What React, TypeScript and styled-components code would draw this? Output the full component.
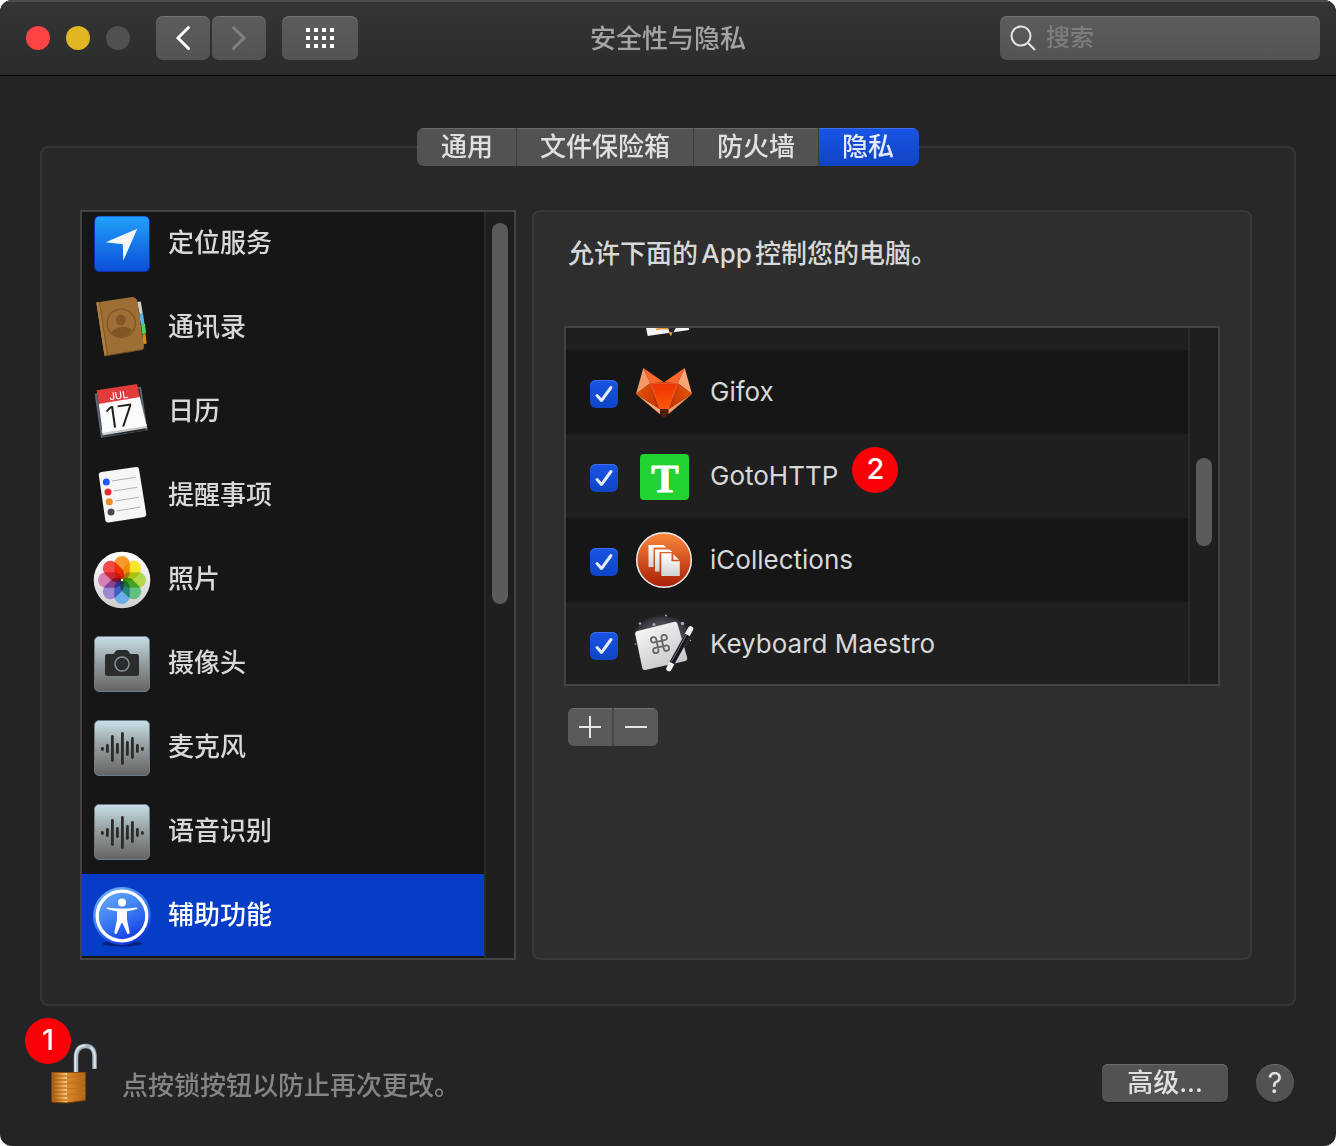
import React, { useState } from "react";
import styled, { createGlobalStyle, css } from "styled-components";

const GlobalStyle = createGlobalStyle`
  *, *::before, *::after { box-sizing: border-box; }
  body {
    margin: 0;
    background: #ffffff;
    font-family: Inter, "Noto Sans CJK SC", sans-serif;
    font-size: 26px;
    line-height: 38px;
    color: #d8d8d8;
  }
  button, input { font: inherit; color: inherit; margin: 0; }
  button { border: 0; padding: 0; background: none; }
  ul { list-style: none; margin: 0; padding: 0; }
  h1, p { margin: 0; font-size: inherit; font-weight: 500; }
  svg { display: block; overflow: visible; flex: none; }
`;

const Window = styled.div`
  display: flex;
  flex-direction: column;
  min-height: 100vh;
  background: #242426;
  border-radius: 12px;
  overflow: hidden;
`;

/* ---------- Title bar ---------- */

const TitleBar = styled.header`
  display: grid;
  grid-template-columns: 1fr auto 1fr;
  align-items: center;
  height: 76px;
  padding: 0 16px;
  background: linear-gradient(#343535, #2a2b2b);
  border-bottom: 1px solid #000;
  box-shadow: inset 0 2px #4c4d4d;
`;

const TitleTools = styled.div`
  display: flex;
  align-items: center;
  gap: 16px;
`;

const Lights = styled.div`
  display: flex;
  gap: 16px;
  padding: 0 10px;
`;

const Light = styled.button<{ $color: string }>`
  width: 24px;
  height: 24px;
  border-radius: 50%;
  background: ${(p) => p.$color};
`;

const NavPair = styled.div`
  display: flex;
  gap: 2px;
`;

const raised = css`
  background: linear-gradient(#5b5c5e, #525355);
  box-shadow: inset 0 1px #707173;
`;

const ToolButton = styled.button<{ $width: number }>`
  display: grid;
  place-items: center;
  width: ${(p) => p.$width}px;
  height: 44px;
  border-radius: 7px;
  ${raised}
`;

const Title = styled.h1`
  padding-top: 2px;
  color: #a4a4a6;
`;

const SearchBox = styled.label`
  display: flex;
  align-items: center;
  justify-self: end;
  gap: 10px;
  width: 320px;
  height: 44px;
  padding: 0 10px;
  border-radius: 7px;
  ${raised}
`;

const SearchInput = styled.input`
  flex: 1;
  min-width: 0;
  height: 38px;
  padding: 0;
  border: 0;
  outline: 0;
  background: transparent;
  font-size: 24px;
  font-weight: 500;
  &::placeholder { color: #7c7d7e; opacity: 1; }
`;

/* ---------- Tabs and panels ---------- */

const Main = styled.main`
  flex: 1;
  display: flex;
  flex-direction: column;
  padding: 52px 40px 0;
`;

const Tabs = styled.div`
  z-index: 1;
  align-self: center;
  display: flex;
  gap: 1px;
  height: 38px;
  margin-bottom: -20px;
  border-radius: 7px;
  overflow: hidden;
  background: #3e3e3f;
`;

const Tab = styled.button<{ $active: boolean }>`
  padding: 0 23px;
  color: ${(p) => (p.$active ? "#e4eafc" : "#e0e0e0")};
  font-weight: 500;
  background: ${(p) => (p.$active ? "linear-gradient(#1854e4, #1044c4)" : "#525252")};
  box-shadow: inset 0 1px ${(p) => (p.$active ? "#3d70ea" : "#6a6a6a")};
  &:first-child { padding-left: 24px; }
  &:last-child { padding-right: 25px; }
`;

const Panel = styled.section`
  flex: 1;
  display: flex;
  gap: 16px;
  padding: 62px 42px 44px 38px;
  border: 2px solid #363637;
  border-radius: 8px;
  background: #282828;
`;

const ListFrame = styled.div`
  display: flex;
  overflow: hidden;
  border: 2px solid #434343;
  background: #161616;
`;

const Sidebar = styled(ListFrame)`
  width: 436px;
  flex: none;
`;

const ServiceList = styled.ul`
  flex: 1;
  margin-top: -10px;
`;

const ServiceRow = styled.button<{ $active: boolean }>`
  display: flex;
  align-items: center;
  gap: 16px;
  width: 100%;
  height: 84px;
  padding: 0 10px;
  font-weight: 500;
  text-align: left;
  ${(p) =>
    p.$active &&
    css`
      color: #fff;
      background: #063dc7;
      box-shadow: inset 0 -2px #161616;
    `}
`;

const RowText = styled.span`
  padding-bottom: 2px;
`;

const Track = styled.div`
  width: 30px;
  padding: 11px 6px;
  border-left: 2px solid #2b2b2b;
  background: #1f1f1f;
`;

const Thumb = styled.div<{ $offset: number; $length: number }>`
  width: 16px;
  height: ${(p) => p.$length}px;
  margin-top: ${(p) => p.$offset}px;
  border-radius: 8px;
  background: #5b5b5b;
`;

const Detail = styled.section`
  flex: 1;
  min-width: 0;
  padding: 23px 30px;
  border: 2px solid #393939;
  border-radius: 8px;
  background: #2e2e2e;
`;

const Prompt = styled.p`
  padding-left: 4px;
  margin-bottom: 53px;
  text-autospace: normal;
`;

const AppFrame = styled(ListFrame)`
  height: 360px;
`;

const AppList = styled.ul`
  flex: 1;
  margin-top: -62px;
`;

const AppRow = styled.li`
  height: 84px;
  background: #161616;
  &:nth-child(odd) { background: #1f1f1f; }
`;

const AppLabel = styled.label`
  display: flex;
  align-items: center;
  gap: 16px;
  height: 100%;
  padding-left: 24px;
`;

const AppName = styled.span`
  position: relative;
`;

const CheckCell = styled.span`
  display: grid;
  place-items: center;
  margin-top: 4px;
  & > * { grid-area: 1 / 1; }
`;

const CheckInput = styled.input`
  appearance: none;
  width: 28px;
  height: 28px;
  border-radius: 6px;
  background: #525252;
  box-shadow: inset 0 1px #707173;
  &:checked {
    background: linear-gradient(#1854e4, #1044c4);
    box-shadow: inset 0 1px #3d70ea;
  }
  & + svg { pointer-events: none; visibility: hidden; }
  &:checked + svg { visibility: visible; }
`;

const Badge = styled.span<{ $left: string; $top: number }>`
  position: absolute;
  left: ${(p) => p.$left};
  top: ${(p) => p.$top}px;
  z-index: 1;
  width: 46px;
  height: 46px;
  border-radius: 50%;
  background: #fb0007;
  color: #fff;
  font-size: 29px;
  font-weight: 500;
  line-height: 44px;
  text-align: center;
`;

const EditButtons = styled.div`
  display: inline-flex;
  gap: 2px;
  margin: 22px 4px 0;
  border-radius: 6px;
  overflow: hidden;
  background: #484848;
`;

const EditButton = styled.button`
  display: grid;
  place-items: center;
  width: 44px;
  height: 38px;
  background: #5a5a5a;
  box-shadow: inset 0 1px #707070;
`;

/* ---------- Footer ---------- */

const Footer = styled.footer`
  display: flex;
  align-items: flex-end;
  gap: 28px;
  padding: 36px 42px 44px 50px;
`;

const LockNote = styled.div`
  flex: 1;
  display: flex;
  align-items: flex-end;
  gap: 22px;
  color: #858586;
  line-height: 32px;
`;

const LockButton = styled.button`
  position: relative;
`;

const AdvancedButton = styled.button`
  width: 126px;
  height: 38px;
  border-radius: 6px;
  color: #e0e0e0;
  font-weight: 500;
  background: #525252;
  box-shadow: inset 0 1px #6a6a6a, 0 1px 1px #1a1a1a;
`;

const HelpButton = styled.button`
  width: 38px;
  height: 38px;
  border-radius: 50%;
  color: #e0e0e0;
  font-size: 29px;
  line-height: 36px;
  background: #525252;
  box-shadow: inset 0 1px #6a6a6a, 0 1px 1px #1a1a1a;
`;

/* ---------- Icons ---------- */

const Icon = ({ children }: { children: React.ReactNode }) => (
  <svg width="60" height="60" viewBox="0 0 60 60" aria-hidden="true">
    {children}
  </svg>
);

const LocationIcon = () => (
  <Icon>
    <defs>
      <linearGradient id="loc" x1="0" y1="0" x2="0" y2="1">
        <stop offset="0" stopColor="#22a0fa" />
        <stop offset="1" stopColor="#0c4fd8" />
      </linearGradient>
    </defs>
    <rect x="2" y="2" width="56" height="56" rx="5" fill="#0a2fb0" />
    <rect x="3" y="2.5" width="54" height="54.5" rx="4.5" fill="url(#loc)" />
    <path d="M45.3 14.7 31.3 46.7 30.8 30.3 13.7 28.3Z" fill="#f6f6f6" />
  </Icon>
);

const ContactsIcon = () => (
  <Icon>
    <path d="M45 4l3.8-.4 2 12-3 1z" fill="#d0d0d0" />
    <path d="M47 16.500l4-.8 1.500 10-3.500 1z" fill="#55b9e6" />
    <path d="M49 26.500l4-.8 1 9.800-3.500.8z" fill="#4ed160" />
    <path d="M50.500 36.500l3-.8 1.200 9.800-4 .9z" fill="#d98a12" />
    <path d="M4.300 4.500 40-1q3.500-.4 5.300 3.700L52 49q0 2.300-2 2.700L12.500 58z" fill="#9d6f35" />
    <path d="M4.300 4.500 7.500 4l8 53.400-3 .6z" fill="#b07c3c" />
    <path d="M7.500 4l8 53.400" stroke="#7c5424" strokeWidth="1" fill="none" />
    <path d="M12.500 58 50 51.700q2-.5 2-2.700" stroke="#6e4a1e" strokeWidth="1" fill="none" />
    <circle cx="29.300" cy="25.300" r="14.200" fill="none" stroke="#7f5726" strokeWidth="1.300" />
    <ellipse cx="28.800" cy="22" rx="4.800" ry="5.500" fill="#7f5726" />
    <path d="M19.500 34.500q2.500-4.500 9-5.500 7.500-.9 11.500 3-3.500 6.500-10 7-6.500.3-10.500-4.500z" fill="#7f5726" />
  </Icon>
);

const CalendarIcon = () => (
  <Icon>
    <path d="M2.700 11.700 49 4.700l6.700 43.600L9 55.700z" fill="#5b6a76" />
    <path d="M5.200 13 47.500 6.500l6.200 42L10.500 54.500z" fill="#26292c" />
    <path d="M9.500 48 54.500 42l.6 4-44.400 7.500z" fill="#c9c9c9" />
    <path d="M6.700 21 47.700 14 54.600 44 10.500 51z" fill="#fbfbfb" />
    <path d="M4.700 8.300 45 2l3 13L6.700 22z" fill="#e03c3c" />
    <g transform="rotate(-8 27 28)" fill="#1c1c1c" textAnchor="middle" fontFamily="Inter, sans-serif">
      <text x="28.500" y="17" fontSize="10" fill="#fff">JUL</text>
      <text x="27" y="45" fontSize="30" fontWeight="300">17</text>
    </g>
  </Icon>
);

const RemindersIcon = () => (
  <Icon>
    <path d="M9.500 6 44 1.100q2.600-.3 3 2.200L54.300 48q.3 2.500-2 3L16.500 56.400q-2.700.3-3.200-2.200L6.800 9q-.3-2.600 2.700-3z" fill="#f6f6f6" />
    <g stroke="#a9a9a9" strokeWidth="0.900">
      <path d="M20 15l23.700-3.700M21.700 25l23.600-3.700M23.300 35l23.400-3.700M25 45l23.300-4" />
    </g>
    <circle cx="14.300" cy="16" r="3.500" fill="#1f5cf5" />
    <circle cx="16" cy="26" r="3.500" fill="#e3302f" />
    <circle cx="17.300" cy="35.700" r="3.500" fill="#ee8e22" />
    <circle cx="19" cy="46" r="3.500" fill="#454a55" />
  </Icon>
);

const petals = ["#f99a2c", "#f7e52a", "#b2d84a", "#5fc283", "#6aaeea", "#9d88d2", "#d880b2", "#f54a4a"];

const PhotosIcon = () => (
  <Icon>
    <defs>
      <linearGradient id="pho" x1="0" y1="0" x2="0" y2="1">
        <stop offset="0" stopColor="#ffffff" />
        <stop offset="1" stopColor="#cfcfcf" />
      </linearGradient>
    </defs>
    <circle cx="30" cy="30" r="28.300" fill="url(#pho)" />
    <g style={{ isolation: "isolate" }}>
      {petals.map((color, i) => (
        <rect
          key={color}
          x="22.300"
          y="6"
          width="15.400"
          height="24"
          rx="7.700"
          fill={color}
          transform={`rotate(${i * 45} 30 30)`}
          style={{ mixBlendMode: "multiply" }}
        />
      ))}
    </g>
    <circle cx="30" cy="30" r="1.200" fill="#fff" />
  </Icon>
);

const SteelTile = ({ id }: { id: string }) => (
  <>
    <defs>
      <linearGradient id={id} x1="0" y1="0" x2="0" y2="1">
        <stop offset="0" stopColor="#c8e0e8" />
        <stop offset="0.500" stopColor="#929a9c" />
        <stop offset="1" stopColor="#646464" />
      </linearGradient>
    </defs>
    <rect x="2.500" y="2.500" width="55" height="55" rx="4.500" fill={`url(#${id})`} stroke="#6f7d88" />
  </>
);

const CameraIcon = () => (
  <Icon>
    <SteelTile id="cam" />
    <path d="M15.500 20h5q1.500 0 2.200-1.500l.6-1q.8-1.500 2.500-1.500h8.400q1.700 0 2.500 1.500l.6 1Q38 20 39.500 20h5q2.500 0 2.500 2.500v17q0 2.500-2.500 2.500h-29Q13 42 13 39.500v-17Q13 20 15.500 20z" fill="#2c2c2c" />
    <circle cx="30" cy="30" r="7" fill="none" stroke="#8a979c" strokeWidth="1.400" />
  </Icon>
);

const waveBars = [
  [29, 33],
  [26, 35],
  [17, 44],
  [25, 36],
  [14, 47],
  [23, 38],
  [19, 41],
  [26, 35],
  [29, 33],
];

const WaveIcon = ({ id }: { id: string }) => (
  <Icon>
    <SteelTile id={id} />
    {waveBars.map(([top, bottom], i) => (
      <rect key={i} x={9 + i * 5} y={top} width="2.800" height={bottom - top} rx="1.400" fill="#2b2b2b" />
    ))}
  </Icon>
);

const AccessibilityIcon = () => (
  <Icon>
    <defs>
      <linearGradient id="acc" x1="0.200" y1="0" x2="0.700" y2="1">
        <stop offset="0" stopColor="#6cb0fb" />
        <stop offset="0.500" stopColor="#3b7df3" />
        <stop offset="1" stopColor="#0a2fe0" />
      </linearGradient>
    </defs>
    <ellipse cx="30" cy="57.500" rx="20" ry="3" fill="#04247c" />
    <circle cx="30" cy="30" r="29" fill="url(#acc)" />
    <circle cx="30" cy="30" r="24.800" fill="none" stroke="#fff" strokeWidth="3.300" />
    <circle cx="30" cy="16.500" r="4" fill="#fff" />
    <path d="M15.500 21.500q6.500 1 10 1h9q3.500 0 10-1 1.500.2.500 1.600-4.500 1.400-10 2.200v8.200l2.700 13q-.3 2-2.400 1.300L30.500 37h-1l-4.800 10.800q-2 .7-2.400-1.300l2.700-13v-8.200q-5.500-.8-10-2.200-1-1.400.5-1.600z" fill="#fff" />
  </Icon>
);

const SketchIcon = () => (
  <Icon>
    <path d="M4 10 52 4l3 48-41.300 6z" fill="#f4f4f4" />
    <path d="M22 51.500q6-1.500 12-.5" stroke="#e8952a" strokeWidth="1.500" fill="none" />
    <path d="M33 46h11l-5 9-3 1z" fill="#26221e" />
    <path d="M34.500 54.500l4-.5-1.500 4.300z" fill="#f5a01e" />
  </Icon>
);

const GifoxIcon = () => (
  <Icon>
    <defs>
      <linearGradient id="foxFace" x1="0" y1="0" x2="0" y2="1">
        <stop offset="0" stopColor="#ee3409" />
        <stop offset="1" stopColor="#ff5605" />
      </linearGradient>
      <linearGradient id="foxCheek" x1="0" y1="0" x2="1" y2="0.300">
        <stop offset="0" stopColor="#e55706" />
        <stop offset="1" stopColor="#c93604" />
      </linearGradient>
      <linearGradient id="foxCheekR" x1="1" y1="0" x2="0" y2="0.300">
        <stop offset="0" stopColor="#e55706" />
        <stop offset="1" stopColor="#c93604" />
      </linearGradient>
    </defs>
    <path d="M9.300 6 2 32l14.300-10.700z" fill="#f49a68" />
    <path d="M50.700 6 58 32 43.700 21.300z" fill="#fba575" />
    <path d="M9.300 6 30 20.300 16.300 21.300zM50.700 6 30 20.300l13.700 1z" fill="#fa682b" />
    <path d="M2 32 26 47.300v5z" fill="#fba877" />
    <path d="M58 32 34.300 47.300v5z" fill="#f49a68" />
    <path d="M16.300 21.300 2 32l24 15.300z" fill="url(#foxCheek)" />
    <path d="M43.700 21.300 58 32 34.300 47.300z" fill="url(#foxCheekR)" />
    <path d="M16.300 21.300 22 41l4 6.300z" fill="#b32a03" />
    <path d="M43.700 21.300 38 41l-3.700 6.300z" fill="#b32a03" />
    <path d="M16.300 21.300H43.700L34.300 47.300H26z" fill="url(#foxFace)" />
    <path d="M16.300 21.300 30 20.300l13.700 1z" fill="#f4480f" />
    <path d="M26 47.300 16.300 21.300H43.700L34.300 47.300" fill="none" stroke="#fa7a45" strokeWidth="0.600" />
    <path d="M26 47.300h8.300v5L30 55.700l-4-3.400z" fill="#4f1d08" />
  </Icon>
);

const GotoIcon = () => (
  <Icon>
    <rect x="6" y="8" width="49" height="46" rx="4" fill="#20d332" />
    <text
      x="31"
      y="46"
      fontSize="41"
      fontWeight="700"
      fontFamily='"Liberation Serif", serif'
      textAnchor="middle"
      fill="#fff"
      stroke="#fff"
      strokeWidth="1"
    >
      T
    </text>
  </Icon>
);

const CollectionsIcon = () => (
  <Icon>
    <defs>
      <linearGradient id="col" x1="0" y1="0" x2="0" y2="1">
        <stop offset="0" stopColor="#fa8a3c" />
        <stop offset="1" stopColor="#a81c04" />
      </linearGradient>
      <linearGradient id="doc" x1="0" y1="0" x2="0" y2="1">
        <stop offset="0" stopColor="#ffffff" />
        <stop offset="1" stopColor="#d2d2d2" />
      </linearGradient>
    </defs>
    <circle cx="30" cy="30" r="27.300" fill="url(#col)" stroke="#ececec" strokeWidth="1.500" />
    <path d="M14.500 15h15l3 2.500H19.500V37h-5z" fill="url(#doc)" />
    <path d="M21 19.500h14.500l3 2.500H25.500V41.500H21z" fill="url(#doc)" />
    <path d="M27.300 23.300H37.500v8h8.300V46H27.300z" fill="url(#doc)" />
    <path d="M39.300 24v5.700H45z" fill="#f7f0ec" />
  </Icon>
);

const KeyboardIcon = () => (
  <Icon>
    <defs>
      <linearGradient id="key" x1="0.200" y1="0" x2="0.800" y2="1">
        <stop offset="0" stopColor="#f8f8fc" />
        <stop offset="1" stopColor="#c4c4c6" />
      </linearGradient>
      <radialGradient id="glow">
        <stop offset="0.600" stopColor="#4a4a50" />
        <stop offset="0.850" stopColor="#33323e" />
        <stop offset="1" stopColor="#1f1f1f" stopOpacity="0" />
      </radialGradient>
    </defs>
    <ellipse cx="28" cy="22" rx="30" ry="22" fill="url(#glow)" />
    <g fill="#a9a9b4">
      <circle cx="32" cy="1.500" r="1" />
      <circle cx="6" cy="9.500" r="1.200" />
      <circle cx="20" cy="10.500" r="1.500" />
      <circle cx="48.500" cy="9.500" r="1.800" />
      <circle cx="56.500" cy="26.500" r="0.800" />
      <circle cx="1.500" cy="30" r="0.800" />
    </g>
    <path d="M3.500 17 40.500 7.800q2.300-.4 2.900 1.800L53.300 44q.5 2.300-1.800 2.900L11.500 56q-2.600.4-3.200-1.800L1.200 20q-.3-2.500 2.300-3z" fill="url(#key)" />
    <path
      d="M15 6v12a3 3 0 1 0 3-3H6a3 3 0 1 0 3 3V6a3 3 0 1 0-3 3h12a3 3 0 1 0-3-3"
      transform="translate(26 30) rotate(-12) scale(0.9) translate(-12 -12)"
      fill="none"
      stroke="#66666a"
      strokeWidth="2"
    />
    <g strokeWidth="5.500" strokeLinecap="round">
      <path d="M56.500 15 35 54.500" stroke="#e9ecf0" />
      <path d="M53.500 21 38 49" stroke="#17171d" strokeLinecap="butt" />
    </g>
    <path d="M52.300 21 37.500 47.500" stroke="#77777f" strokeWidth="1" />
  </Icon>
);

const LockIcon = () => (
  <svg width="50" height="60" viewBox="0 0 50 60" aria-hidden="true">
    <defs>
      <linearGradient id="brassL" x1="0" y1="0" x2="1" y2="0">
        <stop offset="0" stopColor="#9c5a12" />
        <stop offset="0.600" stopColor="#e39a3c" />
        <stop offset="1" stopColor="#f7c983" />
      </linearGradient>
      <linearGradient id="brassR" x1="0" y1="0" x2="1" y2="0">
        <stop offset="0" stopColor="#dd8b2a" />
        <stop offset="1" stopColor="#b06415" />
      </linearGradient>
    </defs>
    <path d="M26 30V16Q26 4 35.500 4T44.500 16v11" fill="none" stroke="#55636b" strokeWidth="5" />
    <path d="M26 30V16Q26 4 35.500 4T44.500 16v11" fill="none" stroke="#a9b8bf" strokeWidth="4" />
    <path d="M25.300 30V16Q25.500 3.500 35.500 3.500" fill="none" stroke="#e3edf1" strokeWidth="1.500" />
    <path d="M44.800 26V16Q44.500 8 40.500 5" fill="none" stroke="#e3edf1" strokeWidth="1.500" />
    <path d="M1.500 30H17v31L1.500 60z" fill="url(#brassL)" />
    <path d="M17 30h18.500v28.500L17 61z" fill="url(#brassR)" />
    <path d="M1.500 34H17M1.500 38H17M1.500 42H17M1.500 46H17M1.500 50H17M1.500 54H17M1.500 58H17" stroke="#a15d14" strokeWidth="1" />
    <path d="M17 35l18.500-.5M17 41l18.500-.7M17 47l18.500-1M17 53l18.500-1.500" stroke="#bd7320" strokeWidth="1" />
    <path d="M1.500 60.300 17 61l18.500-2.500" stroke="#6d3a09" strokeWidth="1.200" fill="none" />
    <path d="M1.500 30.500h34" stroke="#8b4f12" strokeWidth="1" />
  </svg>
);

/* ---------- Data ---------- */

const tabs = ["通用", "文件保险箱", "防火墙", "隐私"];

const services = [
  { name: "定位服务", icon: <LocationIcon /> },
  { name: "通讯录", icon: <ContactsIcon /> },
  { name: "日历", icon: <CalendarIcon /> },
  { name: "提醒事项", icon: <RemindersIcon /> },
  { name: "照片", icon: <PhotosIcon /> },
  { name: "摄像头", icon: <CameraIcon /> },
  { name: "麦克风", icon: <WaveIcon id="mic" /> },
  { name: "语音识别", icon: <WaveIcon id="speech" /> },
  { name: "辅助功能", icon: <AccessibilityIcon /> },
];

const apps = [
  { name: "", icon: <SketchIcon /> },
  { name: "Gifox", icon: <GifoxIcon /> },
  { name: "GotoHTTP", icon: <GotoIcon />, badge: "2" },
  { name: "iCollections", icon: <CollectionsIcon /> },
  { name: "Keyboard Maestro", icon: <KeyboardIcon /> },
];

export default function App() {
  const [tab, setTab] = useState("隐私");
  const [service, setService] = useState("辅助功能");

  return (
    <>
      <GlobalStyle />
      <Window>
        <TitleBar>
          <TitleTools>
            <Lights>
              <Light $color="#fc4444" aria-label="关闭" />
              <Light $color="#e0b623" aria-label="最小化" />
              <Light $color="#505152" aria-label="缩放" />
            </Lights>
            <NavPair>
              <ToolButton $width={54} aria-label="后退">
                <svg width="14" height="24" viewBox="0 0 14 24" fill="none" stroke="#fff" strokeWidth="3" strokeLinecap="round">
                  <path d="M12.500 1.500 2 12l10.500 10.500" />
                </svg>
              </ToolButton>
              <ToolButton $width={54} aria-label="前进">
                <svg width="14" height="24" viewBox="0 0 14 24" fill="none" stroke="#7e7f81" strokeWidth="3" strokeLinecap="round">
                  <path d="M1.500 1.500 12 12 1.500 22.500" />
                </svg>
              </ToolButton>
            </NavPair>
            <ToolButton $width={76} aria-label="显示全部">
              <svg width="28" height="20" viewBox="0 0 28 20" fill="#fff">
                {[0, 8, 16].map((y) => [0, 8, 16, 24].map((x) => <rect key={`${x}-${y}`} x={x} y={y} width="4" height="4" />))}
              </svg>
            </ToolButton>
          </TitleTools>
          <Title>安全性与隐私</Title>
          <SearchBox>
            <svg width="26" height="26" viewBox="0 0 26 26" fill="none" stroke="#e6e6e6" strokeWidth="2">
              <circle cx="11" cy="11" r="9.500" />
              <path d="M17.800 17.800 25 25" />
            </svg>
            <SearchInput type="text" placeholder="搜索" aria-label="搜索" />
          </SearchBox>
        </TitleBar>

        <Main>
          <Tabs role="tablist">
            {tabs.map((name) => (
              <Tab key={name} role="tab" aria-selected={tab === name} $active={tab === name} onClick={() => setTab(name)}>
                {name}
              </Tab>
            ))}
          </Tabs>
          <Panel>
            <Sidebar>
              <ServiceList>
                {services.map(({ name, icon }) => (
                  <li key={name}>
                    <ServiceRow $active={service === name} onClick={() => setService(name)}>
                      {icon}
                      <RowText>{name}</RowText>
                    </ServiceRow>
                  </li>
                ))}
              </ServiceList>
              <Track>
                <Thumb $offset={0} $length={381} />
              </Track>
            </Sidebar>

            <Detail>
              <Prompt>允许下面的App控制您的电脑。</Prompt>
              <AppFrame>
                <AppList>
                  {apps.map(({ name, icon, badge }) => (
                    <AppRow key={name}>
                      <AppLabel>
                        <CheckCell>
                          <CheckInput type="checkbox" defaultChecked />
                          <svg width="18" height="18" viewBox="0 0 18 18" fill="none" stroke="#e4ebfc" strokeWidth="3" strokeLinecap="round" strokeLinejoin="round">
                            <path d="M2 10.500 6.500 15.500 16 2.500" />
                          </svg>
                        </CheckCell>
                        {icon}
                        <AppName>
                          {name}
                          {badge && (
                            <Badge $left="calc(100% + 14px)" $top={-10}>
                              {badge}
                            </Badge>
                          )}
                        </AppName>
                      </AppLabel>
                    </AppRow>
                  ))}
                </AppList>
                <Track>
                  <Thumb $offset={119} $length={88} />
                </Track>
              </AppFrame>
              <EditButtons>
                <EditButton aria-label="添加">
                  <svg width="22" height="22" viewBox="0 0 22 22" stroke="#e6e6e6" strokeWidth="2">
                    <path d="M11 0v22M0 11h22" />
                  </svg>
                </EditButton>
                <EditButton aria-label="移除">
                  <svg width="22" height="22" viewBox="0 0 22 22" stroke="#e6e6e6" strokeWidth="2">
                    <path d="M0 11h22" />
                  </svg>
                </EditButton>
              </EditButtons>
            </Detail>
          </Panel>
        </Main>

        <Footer>
          <LockNote>
            <LockButton aria-label="锁定">
              <LockIcon />
              <Badge $left="-25px" $top={-24}>
                1
              </Badge>
            </LockButton>
            <p>点按锁按钮以防止再次更改。</p>
          </LockNote>
          <AdvancedButton>高级...</AdvancedButton>
          <HelpButton aria-label="帮助">?</HelpButton>
        </Footer>
      </Window>
    </>
  );
}
